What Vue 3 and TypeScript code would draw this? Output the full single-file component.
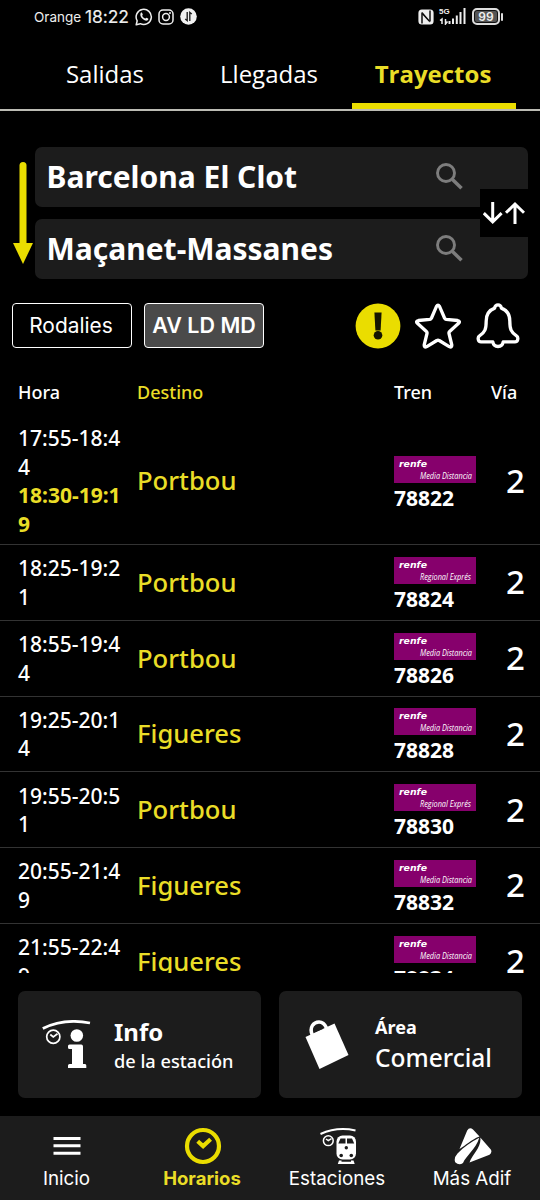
<script setup lang="ts">
interface Train {
  time: string
  delayed?: string
  destination: string
  service: string
  number: string
  platform: string
}

const tabs: string[] = ['Salidas', 'Llegadas', 'Trayectos']
const stations: string[] = ['Barcelona El Clot', 'Maçanet-Massanes']
const trains: Train[] = [
  { time: '17:55-18:44', delayed: '18:30-19:19', destination: 'Portbou', service: 'Media Distancia', number: '78822', platform: '2' },
  { time: '18:25-19:21', destination: 'Portbou', service: 'Regional Exprés', number: '78824', platform: '2' },
  { time: '18:55-19:44', destination: 'Portbou', service: 'Media Distancia', number: '78826', platform: '2' },
  { time: '19:25-20:14', destination: 'Figueres', service: 'Media Distancia', number: '78828', platform: '2' },
  { time: '19:55-20:51', destination: 'Portbou', service: 'Regional Exprés', number: '78830', platform: '2' },
  { time: '20:55-21:49', destination: 'Figueres', service: 'Media Distancia', number: '78832', platform: '2' },
  { time: '21:55-22:49', destination: 'Figueres', service: 'Media Distancia', number: '78834', platform: '2' },
]
</script>

<template>
  <div class="phone">
    <header class="status">
      <span class="carrier">Orange</span>
      <span class="clock">18:22</span>
      <svg class="s-icon wa" viewBox="0 0 18 18" width="18" height="18">
        <path d="M1.2 16.8 2.2 12.8A7.6 7.6 0 1 1 5.3 15.7Z" fill="none" stroke="#eee" stroke-width="1.5" stroke-linejoin="round" />
        <path d="M5.9 4.8c.5-.5 1-.4 1.2.1l.7 1.6c.1.4-.7 1-.6 1.3.6 1.3 1.6 2.2 2.9 2.8.4.1 1-1 1.4-.8l1.6.8c.5.3.2 1.2-.3 1.6-1.5 1.2-4 0-5.6-1.6S4.600 6.400 5.900 4.800Z" fill="#eee" />
      </svg>
      <svg class="s-icon ig" viewBox="0 0 16 16" width="16" height="16">
        <rect x="1" y="1" width="14" height="14" rx="4" fill="none" stroke="#eee" stroke-width="1.5" />
        <circle cx="8" cy="8" r="3.4" fill="none" stroke="#eee" stroke-width="1.5" />
        <circle cx="12" cy="4" r="1" fill="#eee" />
      </svg>
      <svg class="s-icon" viewBox="0 0 17 17" width="17" height="17">
        <circle cx="8.500" cy="8.500" r="8.300" fill="#f2f2f2" />
        <path d="M7.200 4v8.500L5.200 11M9.800 13V4.500L11.800 6" fill="none" stroke="#222" stroke-width="1.400" />
      </svg>
      <span class="grow"></span>
      <svg class="nfc" viewBox="0 0 16 16" width="16" height="16">
        <rect x=".4" y=".4" width="15.200" height="15.200" rx="3.500" fill="#eee" />
        <path d="M4 14.500V3.500M12 12.500V1.500" fill="none" stroke="#000" stroke-width="1.400" />
        <path d="M4.300 3 11.700 11.500V13.500L4.300 5.500Z" fill="#000" />
      </svg>
      <div class="network">
        <span class="gen">5G</span>
        <svg viewBox="0 0 27 17" width="27" height="17">
          <path d="M1 12.500 3 11v5M6.500 11v5l2-2.500" fill="none" stroke="#eee" stroke-width="1.500" />
          <path d="M10.500 13v3M14 10.500V16M17.800 7.500V16M21.500 4V16M25.500 0V16" stroke="#eee" stroke-width="2" />
        </svg>
      </div>
      <div class="battery"><span>99</span></div>
      <i class="battery-tip"></i>
    </header>

    <nav class="tabs">
      <div v-for="(tab, i) in tabs" :key="tab" class="tab" :class="{ active: i === 2 }"><span>{{ tab }}</span></div>
    </nav>

    <section class="route">
      <svg class="route-arrow" viewBox="0 0 20 102" width="20" height="102">
        <path d="M10 3.500V84" stroke="#eadd00" stroke-width="7" stroke-linecap="round" />
        <path d="M0 81H20L10 102Z" fill="#eadd00" />
      </svg>
      <div class="fields">
        <div v-for="station in stations" :key="station" class="field">
          <span>{{ station }}</span>
          <svg viewBox="0 0 27 27" width="27" height="27" fill="none" stroke="#7d7d7d">
            <circle cx="10" cy="10" r="8.500" stroke-width="2.900" />
            <path d="M16.500 16.500 25.500 25.300" stroke-width="3.500" />
          </svg>
        </div>
        <button class="swap" aria-label="Invertir">
          <svg viewBox="0 0 42 24" width="42" height="24" fill="none" stroke="#fff" stroke-width="3">
            <path d="M9.700 1V20M.8 12.200 9.700 20.800 18.600 12.200M32 23V3.500M23 11.800 32 3 41 11.800" />
          </svg>
        </button>
      </div>
    </section>

    <section class="tools">
      <button class="filter">Rodalies</button>
      <button class="filter selected">AV LD MD</button>
      <div class="actions">
        <svg viewBox="0 0 46 46" width="46" height="46">
          <circle cx="23" cy="23" r="22.400" fill="#eadd00" />
          <path d="M19.400 9.500h7.200l-1 18h-5.200Z" fill="#151500" />
          <circle cx="23" cy="32.300" r="4.300" fill="#151500" />
        </svg>
        <svg viewBox="0 0 46 46" width="46" height="46" fill="none" stroke="#fff" stroke-width="3.300" stroke-linejoin="round">
          <path d="M21.500 3.400Q23 .9 24.500 3.400L29.500 15Q30 16 31.200 16.300L42.600 17.500Q45.600 18.200 43.600 20.300L34.600 28.500Q33.700 29.300 34 30.500L36.800 42Q37 45 34.200 43.600L24.200 37.500Q23 37 21.800 37.500L11.800 43.600Q9 45 9.200 42L12 30.500Q12.300 29.300 11.400 28.500L2.400 20.300Q.4 18.200 3.400 17.500L14.800 16.300Q16 16 16.500 15Z" />
        </svg>
        <svg viewBox="0 0 46 46" width="46" height="46" fill="none" stroke="#fff" stroke-width="3.300" stroke-linejoin="round">
          <path d="M19.700 5.100C19.700.8 26.300.8 26.300 5.100C31.500 7 34.800 11.800 34.800 18C34.800 26 36 29.500 41.500 32.800Q43.500 34 42.500 37.200Q42 38.800 40 38.800H28.200Q27.500 43.500 23 43.500T17.800 38.800H6Q4 38.800 3.500 37.200Q2.500 34 4.500 32.800C10 29.500 11.200 26 11.200 18C11.200 11.800 14.500 7 19.700 5.100Z" />
        </svg>
      </div>
    </section>

    <section class="board">
      <div class="board-head">
        <span>Hora</span><span class="yellow">Destino</span><span>Tren</span><span>Vía</span>
      </div>
      <div class="rows">
        <article v-for="train in trains" :key="train.number" class="row">
          <div class="times">
            <div>{{ train.time }}</div>
            <div v-if="train.delayed" class="delayed">{{ train.delayed }}</div>
          </div>
          <div class="destination">{{ train.destination }}</div>
          <div class="train">
            <div class="brand">
              <svg viewBox="0 0 82 27" width="82" height="27" fill="#fff">
                <text class="renfe" x="5" y="11" textLength="28" lengthAdjust="spacingAndGlyphs">renfe</text>
                <text class="service" x="26" y="22.500" :textLength="train.service === 'Media Distancia' ? 52 : 51" lengthAdjust="spacingAndGlyphs">{{ train.service }}</text>
              </svg>
            </div>
            <div class="number">{{ train.number }}</div>
          </div>
          <div class="platform">{{ train.platform }}</div>
        </article>
      </div>
    </section>

    <section class="cards">
      <div class="card">
        <svg class="info-icon" viewBox="0 0 50 50" width="50" height="50">
          <path d="M.8 8.500Q22-2 48 3" fill="none" stroke="#fff" stroke-width="2.800" />
          <circle cx="11.300" cy="16.800" r="6.600" fill="none" stroke="#fff" stroke-width="1.700" />
          <path d="m8.300 14.500 3 2.500 4.200-3.200" fill="none" stroke="#fff" stroke-width="1.700" />
          <circle cx="34.800" cy="15.500" r="6.300" fill="#fff" />
          <path d="M27.500 24.500H39.200Q41 24.500 41 26.500V44H43Q44.300 44 44.300 45.500V48H26V45.500Q26 44 27.500 44H30V29H27.500Q26 29 26 27.500V26Q26 24.500 27.500 24.500Z" fill="#fff" />
        </svg>
        <div class="card-copy">
          <strong>Info</strong>
          <span>de la estación</span>
        </div>
      </div>
      <div class="card shop">
        <svg class="bag" viewBox="0 0 44 50" width="44" height="50">
          <path d="M7.300 15C4 7.500 8.500 2 14 2Q19 2 21.500 8" fill="none" stroke="#fff" stroke-width="3.500" />
          <path d="M.5 17 29.500 3.500 43.500 35 14.500 49Z" fill="#fff" />
          <path d="M9.500 12.300Q10.500 8.500 14 8Q17 7.800 18.300 8.700" fill="#1c1c1c" />
        </svg>
        <div class="card-copy">
          <small>Área</small>
          <b>Comercial</b>
        </div>
      </div>
    </section>

    <footer class="bottom">
      <div class="item">
        <svg viewBox="0 0 38 38" width="38" height="38" fill="#fff"><path d="M5.500 10h27v3h-27zM5.500 17.300h27v3h-27zM5.500 24.800h27v3h-27z" /></svg>
        <span>Inicio</span>
      </div>
      <div class="item current">
        <svg viewBox="0 0 38 38" width="38" height="38" fill="none" stroke="#eadd00">
          <circle cx="19" cy="19" r="16" stroke-width="4.200" />
          <path d="m13.700 14.300 5.400 4.800 7.500-6.800" stroke-width="4.200" />
        </svg>
        <span>Horarios</span>
      </div>
      <div class="item">
        <svg viewBox="0 0 38 38" width="38" height="38">
          <path d="M1.500 7Q18-.5 36.500 3.500" fill="none" stroke="#fff" stroke-width="2" />
          <circle cx="9.300" cy="13.700" r="4.900" fill="none" stroke="#fff" stroke-width="1.500" />
          <path d="m7 12 2.300 1.700 3.200-2" fill="none" stroke="#fff" stroke-width="1.500" />
          <rect x="17.500" y="8.500" width="19.500" height="24" rx="6" fill="#fff" />
          <path d="M21.500 11.500H26.500V16.500H19.300ZM28 11.500H33L35.200 16.500H28Z" fill="#1c1c1c" />
          <circle cx="27.300" cy="20.800" r="1.700" fill="#1c1c1c" />
          <circle cx="22.200" cy="28.500" r="1.800" fill="#1c1c1c" />
          <circle cx="32.300" cy="28.500" r="1.800" fill="#1c1c1c" />
          <path d="M20 33.500H22.500V34.700H32V33.500H34.500L35.700 37H18.800Z" fill="#fff" />
        </svg>
        <span>Estaciones</span>
      </div>
      <div class="item">
        <svg viewBox="0 0 38 38" width="38" height="38" fill="#fff">
          <path d="M5.500 22 13.200 3.500Q15.500-.2 19 2.500L25.500 9.600C16.500 13 12 18.500 5.500 22Z" />
          <path d="M25.300 10.800C17 15 10 20 3.500 26.500Q-.5 31 1.200 35.200Q5 39 9 36C12 29 21.500 22.500 25.300 10.800Z" />
          <path d="M26.300 10.500 36.800 22.500Q38.500 25.500 35.500 27.700L15.500 35.500C18.500 27 27.800 20 26.300 10.500Z" />
        </svg>
        <span>Más Adif</span>
      </div>
    </footer>
  </div>
</template>

<style>
body { background: #000; }
</style>

<style scoped>
* { box-sizing: border-box; }
.phone { width: 540px; height: 1200px; overflow: hidden; display: flex; flex-direction: column; background: #000; color: #fff; font-family: "Open Sans", "Noto Sans", sans-serif; }
svg { display: block; flex: none; }
button { font: inherit; color: inherit; padding: 0; }
.grow { flex: 1; }
.status { height: 38px; flex: none; padding: 0 37px 5px 34px; display: flex; align-items: center; color: #eee; font-family: "Inter", sans-serif; }
.carrier { width: 51px; font-size: 13.5px; }
.clock { width: 50px; font-size: 17.5px; letter-spacing: -.1px; -webkit-text-stroke: .15px; }
.wa { margin-right: 5px; }
.ig { margin-right: 6px; }
.nfc { margin-right: 5px; }
.network { display: grid; margin-right: 6px; }
.network > * { grid-area: 1 / 1; }
.gen { font: 700 8px/8px "Liberation Sans", sans-serif; }
.battery { width: 28px; height: 17px; border: 2px solid #ddd; border-radius: 5px; background: #555; box-shadow: inset 0 0 0 1px #111; display: grid; place-items: center; font-size: 12px; font-weight: 600; line-height: 13px; }
.battery-tip { width: 2px; height: 8px; margin-left: 1px; background: #ddd; border-radius: 1px; }
.tabs { height: 73px; flex: none; border-bottom: 2px solid #bcbcb4; padding: 0 24px; display: grid; grid-template-columns: repeat(3, 164px); font-size: 24px; text-align: center; }
.tab { height: 71px; padding-right: 2px; line-height: 71px; white-space: nowrap; }
.tab.active { color: #eadd27; font-weight: 700; border-bottom: 6px solid #eadd00; }
.route { height: 168px; flex: none; padding: 36px 12px 0 13px; display: flex; }
.route-arrow { margin: 15px 2px 0 0; }
.fields { position: relative; width: 493px; display: flex; flex-direction: column; gap: 12px; }
.field { height: 60px; padding: 0 65px 0 12px; border-radius: 7px; background: #1c1c1c; display: flex; align-items: center; justify-content: space-between; font: 700 30px/60px "Noto Sans", sans-serif; }
.field span { margin-left: -.5px; }
.field svg { margin-top: -1px; }
.swap { position: absolute; right: 0; top: 42px; width: 48px; height: 48px; border: 0; background: #000; display: grid; place-items: center; }
.tools { height: 92px; flex: none; padding: 24px 19px 0 12px; display: flex; gap: 12px; }
.filter { width: 120px; height: 45px; border: 1.5px solid #fff; border-radius: 4px; background: #000; font: 400 20.900px/43px "Inter", sans-serif; white-space: nowrap; }
.filter:not(.selected) { padding-right: 2px; }
.filter.selected { background: #4a4a4a; font-weight: 600; font-size: 21.500px; }
.actions { margin-left: auto; display: flex; gap: 14px; }
.board { height: 602px; flex: none; overflow: hidden; }
.board-head { height: 41px; padding-left: 18px; display: grid; grid-template-columns: 119px 257px 97px 1fr; font: 500 18px/43px "Noto Sans", sans-serif; }
.yellow { color: #eadd27; }
.row { height: 75.750px; border-bottom: 1px solid #333; padding: 1px 0 0 18px; display: grid; grid-template-columns: 104px 15px 257px 82px 49px; align-items: center; }
.row:first-child { height: 133px; padding-top: 6px; }
.times { grid-column: 1; font: 500 21px/28.500px "Noto Sans", sans-serif; word-break: break-all; }
.delayed { color: #eadd27; font-weight: 700; }
.destination { grid-column: 3; font: 500 25.600px/35px "Noto Sans", sans-serif; margin-top: -1px; color: #eadd27; }
.train { grid-column: 4; padding-top: 5px; }
.row:first-child .train { padding-top: 7px; }
.brand { width: 82px; height: 27px; background: #86006c; }
.number { font-size: 21px; line-height: 30px; font-weight: 700; }
.renfe { font: italic 700 9.500px/1.4 "DejaVu Sans", sans-serif; }
.service { font: italic 400 9px/1.4 "Open Sans", sans-serif; }
.platform { grid-column: 5; margin-top: -2px; text-align: right; font: 550 33px/45px "Noto Sans", sans-serif; }
.cards { height: 143px; flex: none; padding: 18px 18px 0; display: flex; gap: 18px; }
.card { width: 243px; height: 107px; border-radius: 7px; background: #1c1c1c; display: flex; align-items: center; padding-left: 24px; font-family: "Noto Sans", sans-serif; }
.info-icon { margin-right: 22px; }
.shop { padding-left: 26px; }
.bag { margin-right: 26px; }
.card-copy { display: flex; flex-direction: column; white-space: nowrap; }
.card-copy strong { font-size: 24px; line-height: 33px; }
.card-copy span { font-size: 18.200px; line-height: 26px; font-weight: 500; }
.card-copy small { font-size: 18px; line-height: 25px; font-weight: 700; }
.card-copy b { font-size: 24.500px; line-height: 35px; font-weight: 500; }
.bottom { height: 84px; flex: none; background: #1c1c1c; display: grid; grid-template-columns: repeat(4, 135px); }
.item { padding: 11px 0 0; display: flex; flex-direction: column; align-items: center; font: 400 18.800px/27px "Inter", sans-serif; white-space: nowrap; }
.item span { margin-left: -1px; }
.item:first-child { padding-right: 1px; }
.current { color: #eadd27; font-size: 18.500px; font-weight: 700; }
</style>
